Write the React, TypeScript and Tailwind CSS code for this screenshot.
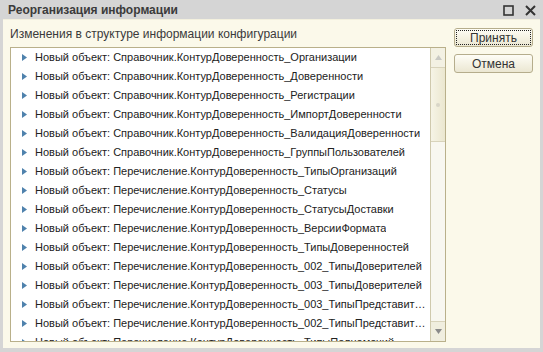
import React from 'react'

const rows: string[] = [
  'Новый объект: Справочник.КонтурДоверенность_Организации',
  'Новый объект: Справочник.КонтурДоверенность_Доверенности',
  'Новый объект: Справочник.КонтурДоверенность_Регистрации',
  'Новый объект: Справочник.КонтурДоверенность_ИмпортДоверенности',
  'Новый объект: Справочник.КонтурДоверенность_ВалидацияДоверенности',
  'Новый объект: Справочник.КонтурДоверенность_ГруппыПользователей',
  'Новый объект: Перечисление.КонтурДоверенность_ТипыОрганизаций',
  'Новый объект: Перечисление.КонтурДоверенность_Статусы',
  'Новый объект: Перечисление.КонтурДоверенность_СтатусыДоставки',
  'Новый объект: Перечисление.КонтурДоверенность_ВерсииФормата',
  'Новый объект: Перечисление.КонтурДоверенность_ТипыДоверенностей',
  'Новый объект: Перечисление.КонтурДоверенность_002_ТипыДоверителей',
  'Новый объект: Перечисление.КонтурДоверенность_003_ТипыДоверителей',
  'Новый объект: Перечисление.КонтурДоверенность_003_ТипыПредставителей',
  'Новый объект: Перечисление.КонтурДоверенность_002_ТипыПредставителей',
  'Новый объект: Перечисление.КонтурДоверенность_ТипыПолномочий',
]

function Arrow() {
  return (
    <svg width="5" height="7" viewBox="0 0 5 7" className="shrink-0">
      <path d="M0 0 L5 3.5 L0 7 Z" fill="#4f82ad" />
    </svg>
  )
}

export default function App() {
  return (
    <div
      className="flex h-[352px] w-[543px] flex-col bg-[#d5d5d5] text-[#333]"
      style={{ fontFamily: '"Liberation Sans", Arial, sans-serif' }}
    >
      {/* Title bar */}
      <div className="flex h-[19px] shrink-0 items-center justify-between pl-[8px] pr-[7px]">
        <span className="text-[12px] font-bold text-[#3b3b3b]">Реорганизация информации</span>
        <div className="flex items-center gap-[11px] pt-[2px]">
          <svg width="11" height="11" viewBox="0 0 11 11">
            <rect x="1" y="1" width="9" height="9" fill="none" stroke="#333" strokeWidth="1.6" />
          </svg>
          <svg width="11" height="11" viewBox="0 0 11 11">
            <path d="M1 1 L10 10 M10 1 L1 10" stroke="#333" strokeWidth="2" />
          </svg>
        </div>
      </div>

      {/* Body */}
      <div className="mx-[3px] mb-[4px] flex flex-1 border-t border-[#f3f0de] bg-[#fbf9ea] pl-[7px] pr-[7px] pt-[7px]">
        <div className="flex w-[436px] flex-col">
          <div className="h-[14px] text-[12px] leading-[14px] text-[#3a3a3a]">
            Изменения в структуре информации конфигурации
          </div>
          <div className="mt-[6px] flex h-[295px] border border-[#b9b08a] bg-white">
            <div className="flex min-w-0 flex-1 flex-col overflow-hidden">
              {rows.map((r) => (
                <div key={r} className="flex h-[19px] shrink-0 items-center gap-[8px] pl-[11px] pr-[4px]">
                  <Arrow />
                  <span className="truncate text-[11px] text-[#222]">{r}</span>
                </div>
              ))}
            </div>
            {/* Scrollbar */}
            <div className="flex w-[15px] shrink-0 flex-col border-l border-[#cfc9ad] bg-[#f8f7f0]">
              <div className="flex h-[20px] items-center justify-center border-b border-[#d8d3bb] bg-[#f3f1e3]">
                <svg width="7" height="5" viewBox="0 0 7 5">
                  <path d="M0 5 L3.5 0 L7 5 Z" fill="#c9c9c4" />
                </svg>
              </div>
              <div className="flex h-[74px] items-center justify-center border-b border-[#d8d3bb] bg-gradient-to-r from-[#f6f4e6] to-[#ebe7cf]">
                <div className="h-[4px] w-[4px] rounded-full bg-[#d9d6c8]" />
              </div>
              <div className="flex-1" />
              <div className="flex h-[20px] items-center justify-center border-t border-[#d8d3bb] bg-[#f0eedf]">
                <svg width="7" height="5" viewBox="0 0 7 5">
                  <path d="M0 0 L3.5 5 L7 0 Z" fill="#8a8a8a" />
                </svg>
              </div>
            </div>
          </div>
        </div>

        {/* Buttons */}
        <div className="ml-[8px] flex w-[79px] flex-col gap-[7px] pt-[1px]">
          <button className="flex h-[19px] items-center justify-center rounded-[3px] border border-[#b5ad8c] bg-gradient-to-b from-[#fefdf6] to-[#ebe7d2] p-[1px]">
            <span className="flex h-full w-full items-center justify-center border border-dotted border-[#222] text-[12px] leading-none text-[#333]">
              Принять
            </span>
          </button>
          <button className="flex h-[19px] items-center justify-center rounded-[3px] border border-[#b5ad8c] bg-gradient-to-b from-[#fefdf6] to-[#ebe7d2] text-[12px] leading-none text-[#333]">
            Отмена
          </button>
        </div>
      </div>
    </div>
  )
}
